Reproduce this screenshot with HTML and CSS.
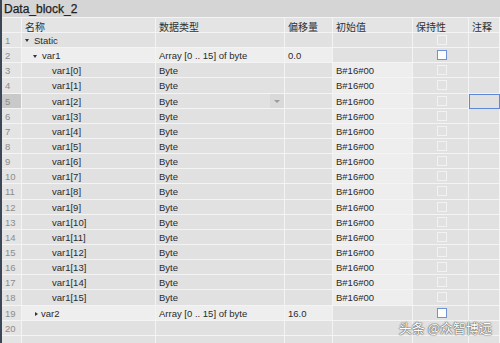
FILE: index.html
```html
<!DOCTYPE html>
<html lang="en">
<head>
    <meta charset="UTF-8">
    <title>Data_block_2</title>
    <link rel="stylesheet" href="styles.css">
</head>
<body>
    <div class="editor">
        <div class="title-bar">Data_block_2</div>
        <div class="row header">
            <div class="cell num"></div>
            <div class="cell">名称</div>
            <div class="cell">数据类型</div>
            <div class="cell">偏移量</div>
            <div class="cell">初始值</div>
            <div class="cell">保持性</div>
            <div class="cell">注释</div>
        </div>
        <div id="rows"></div>
        <div class="watermark">头条 @众智博远</div>
    </div>

    <script>
        const rows = [
            { name: 'Static', level: 0, toggle: 'open', type: '', offset: '', init: '', retain: 'gray' },
            { name: 'var1', level: 1, toggle: 'open', type: 'Array [0 .. 15] of byte', offset: '0.0', init: '', retain: 'edit', light: true }
        ];
        for (let i = 0; i < 16; i++) {
            rows.push({ name: `var1[${i}]`, level: 2, type: 'Byte', offset: '', init: 'B#16#00', retain: 'gray', initLight: true });
        }
        rows.push({ name: 'var2', level: 1, toggle: 'closed', type: 'Array [0 .. 15] of byte', offset: '16.0', init: '', retain: 'edit', light: true });
        rows.push({ name: '', level: 0, type: '', offset: '', init: '', retain: '' });
        rows.push({ name: '', level: 0, type: '', offset: '', init: '', retain: '', noNum: true });

        const html = rows.map((r, i) => {
            const toggle = r.toggle ? `<span class="tri ${r.toggle}"></span>` : '';
            const lc = r.light ? ' light' : '';
            const box = r.retain ? `<span class="box ${r.retain}"></span>` : '';
            const dropdown = i === 4 ? '<span class="drop"></span>' : '';
            return `
                <div class="row${i === 4 ? ' hover' : ''}">
                    <div class="cell num">${r.noNum ? '' : i + 1}</div>
                    <div class="cell name lvl${r.level}${lc}">${toggle}${r.name}</div>
                    <div class="cell type${lc}">${r.type}${dropdown}</div>
                    <div class="cell${lc}">${r.offset}</div>
                    <div class="cell${r.initLight ? ' light' : ''}">${r.init}</div>
                    <div class="cell center">${box}</div>
                    <div class="cell${i === 4 ? ' focus' : ''}"></div>
                </div>
            `;
        }).join('');

        document.getElementById('rows').innerHTML = html;
    </script>
</body>
</html>
```

FILE: styles.css
```css
* {
    margin: 0;
    padding: 0;
    box-sizing: border-box;
}

body {
    font-family: 'Liberation Sans', 'Noto Sans CJK SC', sans-serif;
    font-size: 9.5px;
    color: #2a2a2a;
    background: #e2e2e2;
    width: 500px;
    height: 343px;
    overflow: hidden;
}

.editor {
    position: relative;
    height: 343px;
    border-left: 2px solid #3b4656;
    overflow: hidden;
}

.title-bar {
    height: 18px;
    line-height: 18px;
    padding-left: 2px;
    background: #d5d5d5;
    font-size: 12px;
    color: #1e1e1e;
    border-bottom: 1px solid #f4f4f4;
    -webkit-text-stroke: 0.25px #1e1e1e;
}

.row {
    display: grid;
    grid-template-columns: 20px 134px 129px 48px 80px 56px 31px;
    height: 15.15px;
}

.row.header {
    height: 15px;
    background: #e4e4e4;
}

.cell {
    border-right: 1px solid #f4f4f4;
    border-bottom: 1px solid #f4f4f4;
    line-height: 14px;
    padding-top: 1px;
    padding-left: 3px;
    white-space: nowrap;
    overflow: hidden;
    background: #e1e1e1;
    position: relative;
}

.header .cell {
    background: #e4e4e4;
    font-family: 'Noto Sans CJK SC', sans-serif;
    font-size: 10px;
    color: #303030;
    line-height: 14px;
    padding-top: 2px;
}

.cell.num {
    color: #8c8c8c;
    padding-left: 3px;
    background: #e4e4e4;
}

.hover .cell.num {
    background: #c9c9c9;
}

.cell.light {
    background: #eeeeee;
}

.cell.center {
    display: flex;
    align-items: center;
    justify-content: center;
    padding-top: 0;
}

.name.lvl0 { padding-left: 3px; }
.name.lvl1 { padding-left: 11px; }
.name.lvl2 { padding-left: 30px; }

.tri {
    display: inline-block;
    width: 0;
    height: 0;
    vertical-align: middle;
    margin-top: -1px;
}

.tri.open {
    border-left: 2.5px solid transparent;
    border-right: 2.5px solid transparent;
    border-top: 3px solid #333;
    margin-right: 5px;
}

.tri.closed {
    border-top: 2.5px solid transparent;
    border-bottom: 2.5px solid transparent;
    border-left: 3px solid #333;
    margin-left: 2px;
    margin-right: 3px;
}

.box {
    display: block;
    width: 10px;
    height: 10px;
}

.box.gray {
    border: 1px solid #f2f2f2;
}

.box.edit {
    background: #ffffff;
    border: 1px solid #6f92d6;
}

.drop {
    position: absolute;
    right: 0;
    top: 0;
    width: 14px;
    height: 14px;
    background: #d9d9d9;
}

.drop::after {
    content: '';
    position: absolute;
    left: 4px;
    top: 6px;
    border-left: 3px solid transparent;
    border-right: 3px solid transparent;
    border-top: 3px solid #9a9a9a;
}

.cell.focus {
    border: 1px solid #5f88d8;
}

.watermark {
    position: absolute;
    right: 8px;
    top: 318px;
    font-family: 'Noto Sans CJK SC', sans-serif;
    font-size: 13px;
    color: #ffffff;
    text-shadow: 0 0 1px #555, 0 0 1px #555, 0 0 2px #777;
}
```
